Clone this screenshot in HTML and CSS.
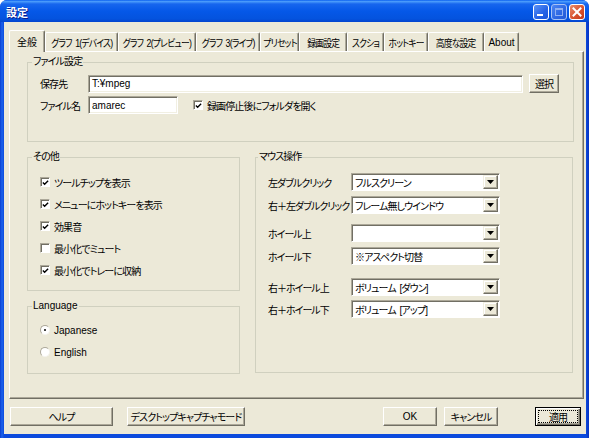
FILE: index.html
```html
<!DOCTYPE html>
<html lang="ja">
<head>
<meta charset="utf-8">
<title>設定</title>
<link rel="stylesheet" href="styles.css">
</head>
<body>
<div class="window">
  <div class="titlebar">
    <span class="title">設定</span>
    <div class="tb-buttons">
      <span class="tb-btn tb-min"><svg width="14" height="14" viewBox="0 0 14 14"><rect x="3" y="9" width="6" height="2" fill="#fff"/></svg></span>
      <span class="tb-btn tb-max"><svg width="14" height="14" viewBox="0 0 14 14"><rect x="3.5" y="3.5" width="7" height="7" fill="none" stroke="#8FB0F2" stroke-width="1"/><rect x="3" y="3" width="8" height="2" fill="#8FB0F2"/></svg></span>
      <span class="tb-btn tb-close"><svg width="14" height="14" viewBox="0 0 14 14"><path d="M3.5 3.5 L10.5 10.5 M10.5 3.5 L3.5 10.5" stroke="#fff" stroke-width="2" stroke-linecap="square"/></svg></span>
    </div>
  </div>
  <div class="frame">
    <div class="client">
      <div class="tabs">
        <div class="tab active"><span class="lbl">全般</span></div>
        <div class="tab"><span class="lbl">グラフ 1(デバイス)</span></div>
        <div class="tab"><span class="lbl">グラフ 2(プレビュー)</span></div>
        <div class="tab"><span class="lbl">グラフ 3(ライブ)</span></div>
        <div class="tab"><span class="lbl">プリセット</span></div>
        <div class="tab"><span class="lbl">録画設定</span></div>
        <div class="tab"><span class="lbl">スクショ</span></div>
        <div class="tab"><span class="lbl">ホットキー</span></div>
        <div class="tab"><span class="lbl">高度な設定</span></div>
        <div class="tab latin"><span class="lbl">About</span></div>
      </div>
      <div class="panel">
        <div class="group group-file">
          <span class="legend">ファイル設定</span>
          <div class="frow">
            <span class="flabel">保存先</span>
            <span class="textbox tb-path latin">T:¥mpeg</span>
            <span class="button btn-select">選択</span>
          </div>
          <div class="frow frow2">
            <span class="flabel">ファイル名</span>
            <span class="textbox tb-name latin">amarec</span>
            <span class="check-item inline-check">
              <span class="checkbox checked"><svg width="8" height="8" viewBox="0 0 8 8"><path d="M1 3.5 L3 5.5 L7 1.5" fill="none" stroke="#000" stroke-width="1.6"/></svg></span>
              <span>録画停止後にフォルダを開く</span>
            </span>
          </div>
        </div>
        <div class="columns">
          <div class="col-left">
            <div class="group group-other">
              <span class="legend">その他</span>
              <div class="check-item">
                <span class="checkbox checked"><svg width="8" height="8" viewBox="0 0 8 8"><path d="M1 3.5 L3 5.5 L7 1.5" fill="none" stroke="#000" stroke-width="1.6"/></svg></span>
                <span>ツールチップを表示</span>
              </div>
              <div class="check-item">
                <span class="checkbox checked"><svg width="8" height="8" viewBox="0 0 8 8"><path d="M1 3.5 L3 5.5 L7 1.5" fill="none" stroke="#000" stroke-width="1.6"/></svg></span>
                <span>メニューにホットキーを表示</span>
              </div>
              <div class="check-item">
                <span class="checkbox checked"><svg width="8" height="8" viewBox="0 0 8 8"><path d="M1 3.5 L3 5.5 L7 1.5" fill="none" stroke="#000" stroke-width="1.6"/></svg></span>
                <span>効果音</span>
              </div>
              <div class="check-item">
                <span class="checkbox"></span>
                <span>最小化でミュート</span>
              </div>
              <div class="check-item">
                <span class="checkbox checked"><svg width="8" height="8" viewBox="0 0 8 8"><path d="M1 3.5 L3 5.5 L7 1.5" fill="none" stroke="#000" stroke-width="1.6"/></svg></span>
                <span>最小化でトレーに収納</span>
              </div>
            </div>
            <div class="group group-lang">
              <span class="legend latin">Language</span>
              <div class="check-item">
                <span class="radio on"></span>
                <span class="latin">Japanese</span>
              </div>
              <div class="check-item">
                <span class="radio"></span>
                <span class="latin">English</span>
              </div>
            </div>
          </div>
          <div class="group group-mouse">
            <span class="legend">マウス操作</span>
            <div class="mrow">
              <span class="mlabel">左ダブルクリック</span>
              <span class="combo"><span class="combo-text">フルスクリーン</span><span class="combo-btn"><svg width="7" height="4" viewBox="0 0 7 4"><path d="M0 0 H7 L3.5 4 Z" fill="#000"/></svg></span></span>
            </div>
            <div class="mrow">
              <span class="mlabel">右＋左ダブルクリック</span>
              <span class="combo"><span class="combo-text">フレーム無しウインドウ</span><span class="combo-btn"><svg width="7" height="4" viewBox="0 0 7 4"><path d="M0 0 H7 L3.5 4 Z" fill="#000"/></svg></span></span>
            </div>
            <div class="mrow">
              <span class="mlabel">ホイール上</span>
              <span class="combo"><span class="combo-text"></span><span class="combo-btn"><svg width="7" height="4" viewBox="0 0 7 4"><path d="M0 0 H7 L3.5 4 Z" fill="#000"/></svg></span></span>
            </div>
            <div class="mrow">
              <span class="mlabel">ホイール下</span>
              <span class="combo"><span class="combo-text">※アスペクト切替</span><span class="combo-btn"><svg width="7" height="4" viewBox="0 0 7 4"><path d="M0 0 H7 L3.5 4 Z" fill="#000"/></svg></span></span>
            </div>
            <div class="mrow">
              <span class="mlabel">右＋ホイール上</span>
              <span class="combo"><span class="combo-text">ボリューム [ダウン]</span><span class="combo-btn"><svg width="7" height="4" viewBox="0 0 7 4"><path d="M0 0 H7 L3.5 4 Z" fill="#000"/></svg></span></span>
            </div>
            <div class="mrow">
              <span class="mlabel">右＋ホイール下</span>
              <span class="combo"><span class="combo-text">ボリューム [アップ]</span><span class="combo-btn"><svg width="7" height="4" viewBox="0 0 7 4"><path d="M0 0 H7 L3.5 4 Z" fill="#000"/></svg></span></span>
            </div>
          </div>
        </div>
      </div>
      <div class="footer">
        <span class="button btn-help">ヘルプ</span>
        <span class="button btn-desk">デスクトップキャプチャモード</span>
        <span class="button btn-ok latin">OK</span>
        <span class="button btn-cancel">キャンセル</span>
        <span class="button btn-apply"><span class="focus">適用</span></span>
      </div>
    </div>
  </div>
</div>
</body>
</html>
```

FILE: styles.css
```css
* { box-sizing: border-box; }
html, body { margin: 0; padding: 0; }
body {
  width: 589px;
  height: 438px;
  overflow: hidden;
  background: #ffffff;
  font-family: "Liberation Sans", "Noto Sans CJK JP", sans-serif;
  font-size: 10px;
  letter-spacing: -0.9px;
  word-spacing: 2px;
  color: #000;
  font-feature-settings: "palt";
}
.latin {
  font-size: 10px;
  letter-spacing: 0;
  word-spacing: 0;
}

.window {
  width: 589px;
  height: 438px;
  display: flex;
  flex-direction: column;
  background: #0842D6;
  border-radius: 7px 7px 0 0;
  overflow: hidden;
}

.titlebar {
  height: 22px;
  flex: none;
  display: flex;
  align-items: center;
  padding: 0 4px 0 6px;
  background: linear-gradient(#0A5FF0 0%, #4A9BFB 7%, #1766EE 18%, #0558E8 50%, #0453DE 85%, #0445CF 100%);
}
.title {
  flex: 1;
  color: #fff;
  font-weight: bold;
  font-size: 11px;
  letter-spacing: 0;
  text-shadow: 1px 1px 0 #0A1A8A;
  padding-top: 1px;
}
.tb-buttons { display: flex; gap: 2px; padding-top: 1px; }
.tb-btn {
  width: 16px;
  height: 16px;
  border: 1px solid #fff;
  border-radius: 3px;
  display: flex;
  align-items: center;
  justify-content: center;
}
.tb-min { background: linear-gradient(135deg, #5C93F6, #2462E6 60%, #1B55DA); }
.tb-max { background: linear-gradient(135deg, #4D86F2, #2C66E3 60%, #2459D6); border-color: #A8C2F5; }
.tb-close { background: linear-gradient(135deg, #E98E6E, #D8532F 55%, #C2391A); }

.frame {
  flex: 1;
  display: flex;
  padding: 0 3px 4px 4px;
  background: linear-gradient(90deg, #0A3ED0 0, #1C63EC 2px, #0B4ADD 4px, #0B4ADD calc(100% - 3px), #0832C0 100%);
}
.client {
  flex: 1;
  background: #ECE9D8;
  padding: 8px 2px 0 5px;
  display: flex;
  flex-direction: column;
}

/* Tabs */
.tabs {
  display: flex;
  align-items: flex-end;
  height: 22px;
  margin-bottom: -1px;
  position: relative;
  z-index: 2;
}
.tab {
  height: 19px;
  margin-bottom: 1px;
  padding: 1px 0 0 0;
  display: flex;
  align-items: center;
  justify-content: center;
  background: #ECE9D8;
  border-top: 1px solid #fff;
  border-left: 1px solid #fff;
  border-right: 1px solid #716F64;
  box-shadow: inset -1px 0 #ACA899;
  border-radius: 2px 2px 0 0;
  white-space: nowrap;
}
.lbl {
  display: inline-block;
  transform: scaleX(0.88);
  white-space: nowrap;
}
.tab.latin .lbl { transform: none; }
.tab.active {
  height: 22px;
  margin-bottom: 0;
  padding: 0;
  width: 36px;
}
.tab.active .lbl { transform: none; letter-spacing: 0; }
.tab:nth-child(2) { width: 73px; }
.tab:nth-child(3) { width: 78px; }
.tab:nth-child(4) { width: 64px; }
.tab:nth-child(5) { width: 39px; }
.tab:nth-child(6) { width: 48px; }
.tab:nth-child(7) { width: 37px; }
.tab:nth-child(8) { width: 44px; }
.tab:nth-child(9) { width: 56px; }
.tab:nth-child(10) { width: 35px; }

/* Panel */
.panel {
  height: 348px;
  flex: none;
  border: 1px solid;
  border-color: #fff #716F64 #716F64 #fff;
  box-shadow: inset -1px -1px 0 #ACA899;
  padding: 10px 9px 0 17px;
}

.group {
  position: relative;
  border: 1px solid #D0D0BF;
}
.legend {
  position: absolute;
  top: -8px;
  left: 4px;
  padding: 0 1px;
  background: #ECE9D8;
  line-height: 14px;
  white-space: nowrap;
}

.group-file {
  height: 80px;
  padding: 11px 0 0 12px;
}
.frow {
  display: flex;
  align-items: center;
  height: 19px;
}
.frow2 { margin-top: 3px; height: 18px; }
.flabel { width: 48px; flex: none; white-space: nowrap; }

.textbox {
  height: 18px;
  background: #fff;
  border: 1px solid;
  border-color: #ACA899 #fff #fff #ACA899;
  box-shadow: inset 1px 1px 0 #716F64, inset -1px -1px 0 #F1EFE2;
  padding: 0 3px;
  display: flex;
  align-items: center;
  white-space: nowrap;
}
.tb-path { width: 435px; }
.tb-name { width: 90px; }

.button {
  display: flex;
  align-items: center;
  justify-content: center;
  height: 19px;
  background: #ECE9D8;
  border: 1px solid;
  border-color: #fff #716F64 #716F64 #fff;
  box-shadow: inset -1px -1px 0 #ACA899;
  white-space: nowrap;
}
.btn-select { width: 30px; margin-left: 6px; }

.check-item {
  display: flex;
  align-items: center;
  height: 22px;
  gap: 4px;
  white-space: nowrap;
}
.inline-check { margin-left: 15px; height: 18px; }

.checkbox {
  width: 10px;
  height: 10px;
  flex: none;
  background: #fff;
  border: 1px solid;
  border-color: #ACA899 #fff #fff #ACA899;
  box-shadow: inset 1px 1px 0 #716F64;
  display: flex;
  align-items: center;
  justify-content: center;
  padding: 1px 0 0 1px;
}
.radio {
  width: 10px;
  height: 10px;
  flex: none;
  border-radius: 50%;
  background: #fff;
  border: 1px solid;
  border-color: #ACA899 #F4F3EE #F4F3EE #ACA899;
  position: relative;
}
.radio.on::after {
  content: "";
  position: absolute;
  left: 3px;
  top: 3px;
  width: 2px;
  height: 2px;
  background: #000;
  border-radius: 1px;
}

.columns {
  display: flex;
  gap: 15px;
  margin-top: 15px;
}
.col-left {
  width: 213px;
  display: flex;
  flex-direction: column;
  gap: 15px;
}
.group-other {
  height: 134px;
  padding: 13px 0 0 12px;
}
.group-lang {
  height: 68px;
  padding: 12px 0 0 12px;
}
.group-mouse {
  width: 318px;
  height: 216px;
  padding: 15px 0 0 12px;
}
.group-mouse .legend { left: 2px; }

.mrow {
  display: flex;
  align-items: center;
  height: 18px;
}
.mrow:nth-of-type(2) { margin-top: 5px; }
.mrow:nth-of-type(3) { margin-top: 10px; }
.mrow:nth-of-type(4) { margin-top: 5px; }
.mrow:nth-of-type(5) { margin-top: 13px; }
.mrow:nth-of-type(6) { margin-top: 4px; }
.mlabel { width: 83px; flex: none; white-space: nowrap; letter-spacing: -1px; }

.combo {
  width: 149px;
  height: 18px;
  display: flex;
  background: #fff;
  border: 1px solid;
  border-color: #ACA899 #fff #fff #ACA899;
  box-shadow: inset 1px 1px 0 #716F64;
  padding: 1px;
}
.combo-text {
  flex: 1;
  padding-left: 2px;
  display: flex;
  align-items: center;
  white-space: nowrap;
}
.combo-btn {
  width: 15px;
  height: 14px;
  background: #ECE9D8;
  border: 1px solid;
  border-color: #F1EFE2 #716F64 #716F64 #F1EFE2;
  box-shadow: inset -1px -1px 0 #ACA899, inset 1px 1px 0 #fff;
  display: flex;
  align-items: center;
  justify-content: center;
}

/* Footer */
.footer {
  display: flex;
  padding-top: 8px;
}
.btn-help { width: 103px; margin-left: 1px; }
.btn-desk { width: 118px; margin-left: 14px; }
.btn-ok { width: 54px; margin-left: 138px; }
.btn-cancel { width: 54px; margin-left: 7px; }
.btn-apply {
  width: 46px;
  margin-left: 37px;
  border: 1px solid #000;
  box-shadow: inset 1px 1px 0 #fff, inset -1px -1px 0 #716F64, inset -2px -2px 0 #ACA899;
  padding: 2px;
}
.focus {
  width: 100%;
  height: 100%;
  display: flex;
  align-items: center;
  justify-content: center;
  outline: 1px dotted #000;
  outline-offset: -1px;
}
```
